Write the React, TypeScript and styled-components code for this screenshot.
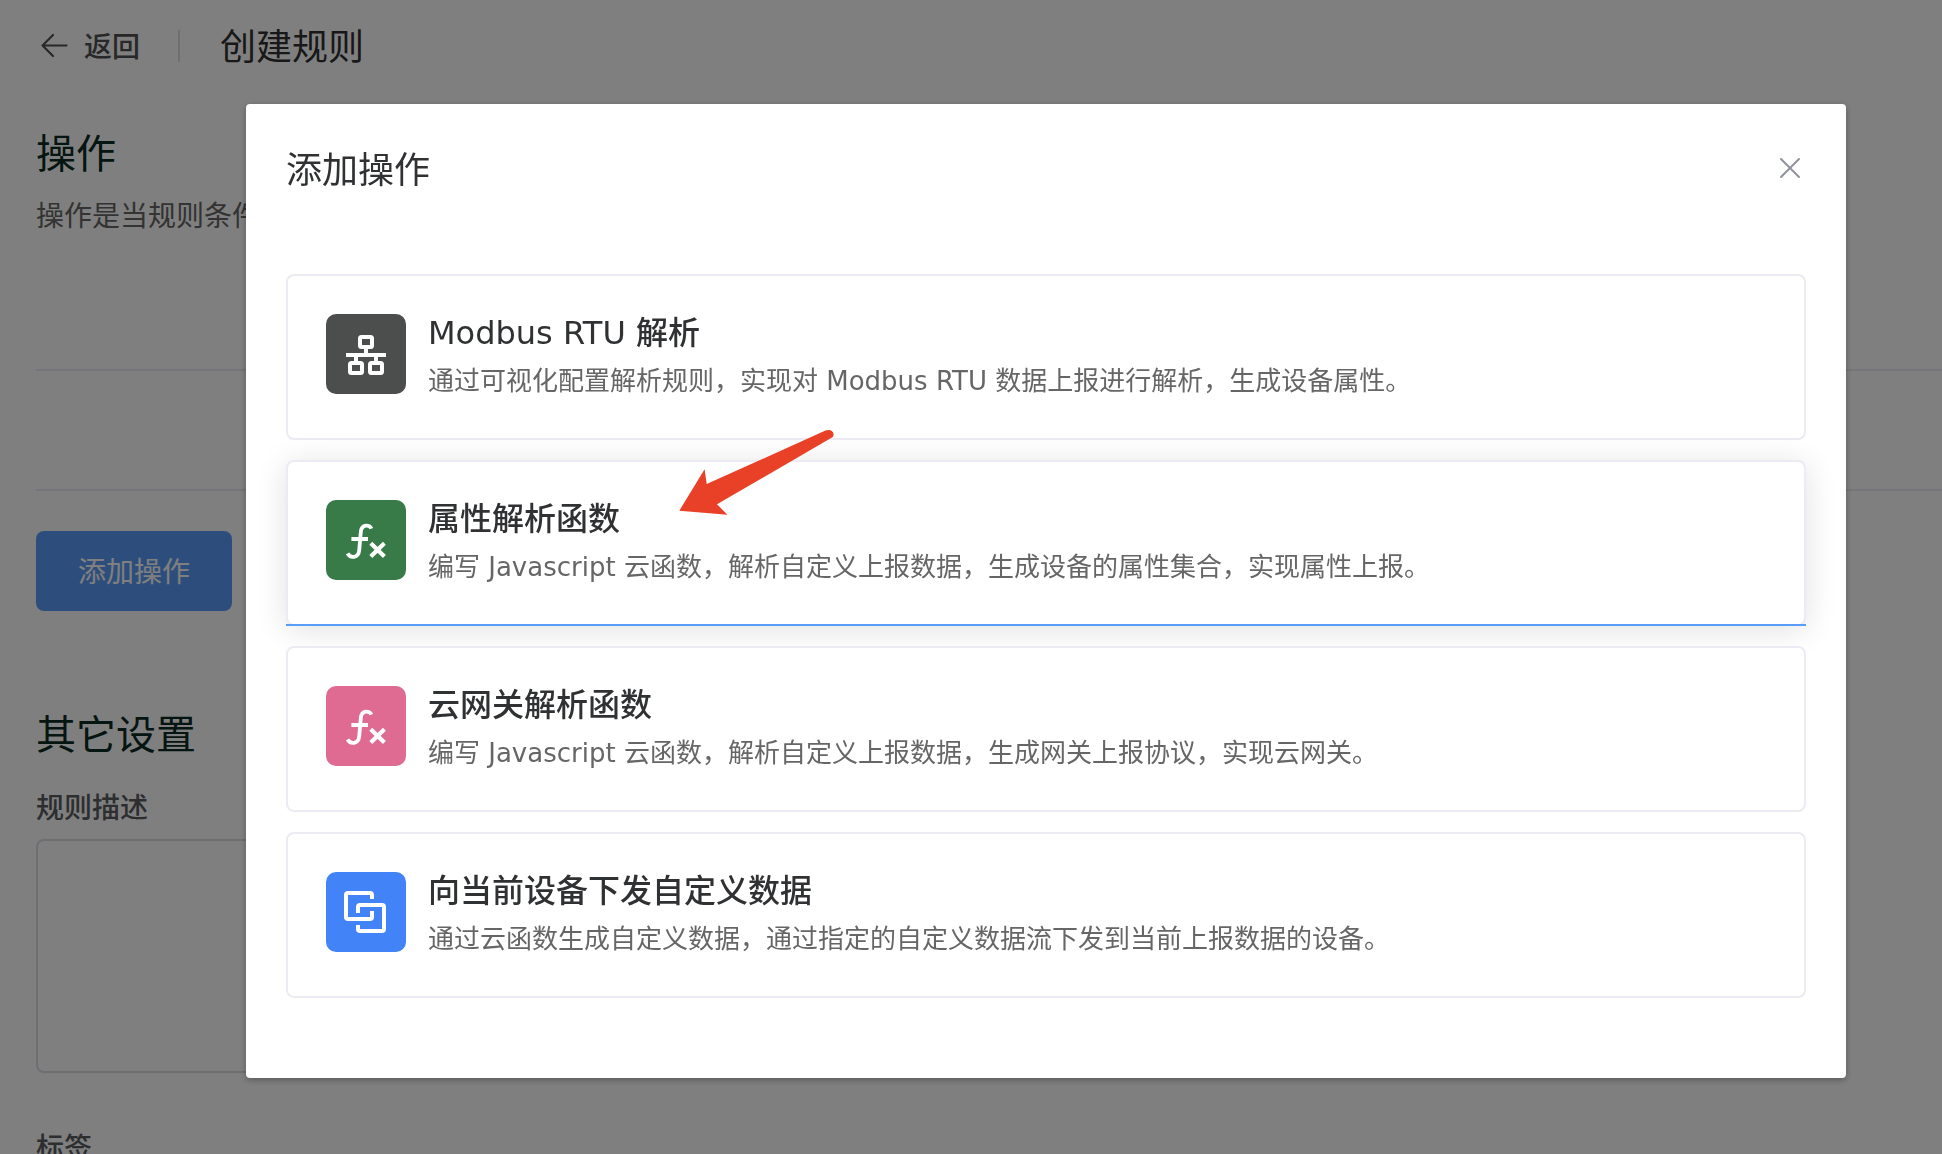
import React from "react";
import styled, { createGlobalStyle } from "styled-components";

const GlobalStyle = createGlobalStyle`
  *, *::before, *::after { box-sizing: border-box; }
  body {
    margin: 0;
    background: #fff;
    color: #303133;
    font-family: "DejaVu Sans", "Noto Sans CJK SC", sans-serif;
    font-size: 28px;
  }
  h1, h2, h3, p, ul { margin: 0; padding: 0; font-weight: 400; }
  button, textarea { font-family: inherit; }
`;

const Page = styled.div`
  height: 100vh;
  overflow: hidden;
`;

const TopBar = styled.header`
  display: flex;
  align-items: center;
  height: 92px;
  padding: 0 36px;
`;

const BackLink = styled.a`
  display: flex;
  align-items: center;
  gap: 12px;
  color: #505153;
  font-weight: 500;
  line-height: 40px;
  text-decoration: none;
`;

const BackText = styled.span`
  padding-top: 4px;
`;

const Divider = styled.span`
  width: 2px;
  height: 32px;
  margin: 0 40px 0 38px;
  background: #dcdce6;
`;

const PageTitle = styled.h1`
  padding-top: 4px;
  font-size: 36px;
  line-height: 48px;
`;

const Section = styled.section`
  display: flex;
  flex-direction: column;
  align-items: flex-start;
  padding: 34px 0 0 36px;
`;

const SectionTitle = styled.h2`
  color: #0a2a22;
  font-size: 40px;
  line-height: 56px;
`;

const SectionNote = styled.p`
  margin-top: 15px;
  color: #666;
  line-height: 40px;
`;

const RuleSlot = styled.div`
  align-self: stretch;
  height: 122px;
  margin: 132px 0 40px;
  border: solid #ebebf3;
  border-width: 2px 0;
`;

const PrimaryButton = styled.button`
  height: 80px;
  padding: 0 42px 2px;
  border: 0;
  border-radius: 8px;
  background: #5a9df8;
  color: #fff;
  font-size: 28px;
`;

const Settings = styled(Section)`
  padding: 96px 36px 0;
`;

const FieldLabel = styled.label`
  margin-top: 28px;
  color: #5a5c60;
  font-weight: 500;
  line-height: 36px;
`;

const TextArea = styled.textarea`
  width: 100%;
  max-width: 1600px;
  height: 234px;
  margin: 12px 0 30px;
  padding: 16px;
  border: 2px solid #dcdce6;
  border-radius: 8px;
  background: #fff;
  font-size: 28px;
  resize: none;
`;

const Overlay = styled.div`
  position: fixed;
  inset: 0;
  display: flex;
  align-items: flex-start;
  padding: 104px 96px 0 246px;
  background: rgba(0, 0, 0, 0.5);
`;

const Dialog = styled.div`
  flex: 1;
  padding: 40px 40px 80px;
  border-radius: 4px;
  background: #fff;
  box-shadow: 0 2px 6px rgba(0, 0, 0, 0.3);
`;

const DialogHeader = styled.div`
  display: flex;
  align-items: center;
  justify-content: space-between;
  height: 50px;
  margin-bottom: 80px;
`;

const DialogTitle = styled.h2`
  padding-top: 4px;
  font-size: 36px;
  line-height: 48px;
`;

const CloseButton = styled.button`
  display: flex;
  padding: 0;
  border: 0;
  background: none;
  color: #909399;
`;

const ActionList = styled.ul`
  display: flex;
  flex-direction: column;
  gap: 20px;
  list-style: none;
`;

const ActionItem = styled.li`
  position: relative;
`;

const ActionCard = styled.button<{ $active: boolean }>`
  position: relative;
  display: flex;
  gap: 22px;
  width: 100%;
  padding: 38px;
  border: 2px solid #ebebf3;
  border-radius: 8px;
  background: #fff;
  color: #303133;
  text-align: left;
  box-shadow: ${(p) => (p.$active ? "0 4px 32px rgba(0, 0, 0, 0.12)" : "none")};

  &::after {
    content: "";
    display: ${(p) => (p.$active ? "block" : "none")};
    position: absolute;
    right: -2px;
    bottom: -2px;
    left: -2px;
    height: 2px;
    background: #5a9df8;
  }
`;

const IconTile = styled.span<{ $color: string }>`
  flex: none;
  width: 80px;
  height: 80px;
  border-radius: 10px;
  background: ${(p) => p.$color};

  svg { display: block; }
`;

const ActionText = styled.span`
  display: flex;
  flex-direction: column;
  gap: 10px;
`;

const ActionName = styled.span`
  font-size: 32px;
  font-weight: 500;
  line-height: 38px;
`;

const ActionNote = styled.span`
  color: #666;
  font-size: 26px;
  line-height: 38px;
`;

const Pointer = styled.svg`
  position: absolute;
  top: -32px;
  left: 392px;
  pointer-events: none;
`;

const NetworkIcon = () => (
  <svg width="80" height="80" fill="none" stroke="#fff" strokeWidth="4" aria-hidden="true">
    <rect x="34" y="23" width="12" height="10" rx="1.5" />
    <rect x="24" y="49" width="12" height="10" rx="1.5" />
    <rect x="44" y="49" width="12" height="10" rx="1.5" />
    <path d="M40 34V41M20 41H60M30 41V48M50 41V48" />
  </svg>
);

const FunctionIcon = () => (
  <svg width="80" height="80" fill="none" stroke="#fff" aria-hidden="true">
    <path
      d="M45.4 28.6C43.8 24.6 35.4 23.4 34.8 32.2L33.2 50.4C32.4 58.4 24.2 58.6 21.6 53.4"
      strokeWidth="3.8"
    />
    <path d="M25.4 39H42" strokeWidth="4" />
    <path d="M44.8 43.2L58.400 56.400M58.400 43.200L44.800 56.400" strokeWidth="4.2" />
  </svg>
);

const LinkedSquaresIcon = () => (
  <svg width="80" height="80" fill="none" stroke="#fff" strokeWidth="4" aria-hidden="true">
    <path d="M46 27V23Q46 21 44 21H22Q20 21 20 23V45Q20 47 22 47H44Q46 47 46 45V39" />
    <path d="M32 41V35Q32 33 34 33H56Q58 33 58 35V57Q58 59 56 59H34Q32 59 32 57V53" />
  </svg>
);

const actions = [
  {
    name: "Modbus RTU 解析",
    note: "通过可视化配置解析规则，实现对 Modbus RTU 数据上报进行解析，生成设备属性。",
    color: "#4c4e4d",
    icon: <NetworkIcon />,
    active: false,
  },
  {
    name: "属性解析函数",
    note: "编写 Javascript 云函数，解析自定义上报数据，生成设备的属性集合，实现属性上报。",
    color: "#387a48",
    icon: <FunctionIcon />,
    active: true,
  },
  {
    name: "云网关解析函数",
    note: "编写 Javascript 云函数，解析自定义上报数据，生成网关上报协议，实现云网关。",
    color: "#df6b92",
    icon: <FunctionIcon />,
    active: false,
  },
  {
    name: "向当前设备下发自定义数据",
    note: "通过云函数生成自定义数据，通过指定的自定义数据流下发到当前上报数据的设备。",
    color: "#4283f7",
    icon: <LinkedSquaresIcon />,
    active: false,
  },
];

export default function App() {
  return (
    <Page>
      <GlobalStyle />
      <TopBar>
        <BackLink href="#">
          <svg width="36" height="36" fill="none" stroke="currentColor" strokeWidth="2.2" strokeLinecap="round" strokeLinejoin="round" aria-hidden="true">
            <path d="M17 7L6.500 17.500L17 28M6.500 17.500H30.500" />
          </svg>
          <BackText>返回</BackText>
        </BackLink>
        <Divider />
        <PageTitle>创建规则</PageTitle>
      </TopBar>

      <Section>
        <SectionTitle>操作</SectionTitle>
        <SectionNote>操作是当规则条件</SectionNote>
        <RuleSlot />
        <PrimaryButton type="button">添加操作</PrimaryButton>
      </Section>

      <Settings>
        <SectionTitle>其它设置</SectionTitle>
        <FieldLabel htmlFor="rule-description">规则描述</FieldLabel>
        <TextArea id="rule-description" />
        <FieldLabel as="span">标签</FieldLabel>
      </Settings>

      <Overlay>
        <Dialog role="dialog" aria-modal="true" aria-labelledby="dialog-title">
          <DialogHeader>
            <DialogTitle id="dialog-title">添加操作</DialogTitle>
            <CloseButton type="button" aria-label="关闭">
              <svg width="32" height="32" fill="none" stroke="currentColor" strokeWidth="2" strokeLinecap="round" aria-hidden="true">
                <path d="M7 6L25 24M25 6L7 24" />
              </svg>
            </CloseButton>
          </DialogHeader>
          <ActionList>
            {actions.map((action) => (
              <ActionItem key={action.name}>
                <ActionCard type="button" $active={action.active}>
                  <IconTile $color={action.color}>{action.icon}</IconTile>
                  <ActionText>
                    <ActionName>{action.name}</ActionName>
                    <ActionNote>{action.note}</ActionNote>
                  </ActionText>
                </ActionCard>
                {action.active && (
                  <Pointer width="158" height="88" viewBox="0 0 158 88" fill="#e94127" aria-hidden="true">
                    <path d="M1.300 82.700L26.600 41.300L28.700 56L147.500 2.600C153 0.500 157.500 5 154.800 9L39 76.300L49.400 86.700Z" />
                  </Pointer>
                )}
              </ActionItem>
            ))}
          </ActionList>
        </Dialog>
      </Overlay>
    </Page>
  );
}
